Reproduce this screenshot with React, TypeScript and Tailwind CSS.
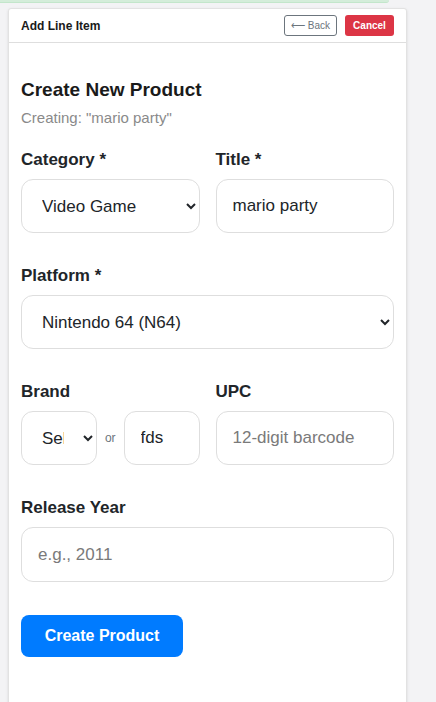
const font = { fontFamily: '"Liberation Sans", Arial, sans-serif' }

function Label({ children }: { children: React.ReactNode }) {
  return <label className="block text-[17px] leading-[19px] font-bold text-[#212529] mb-[10px]">{children}</label>
}

const field =
  'w-full h-[54px] rounded-xl border border-[#dedede] bg-white px-4 text-[17px] text-[#212529] placeholder:text-[#7a7a7a] outline-none'

export default function App() {
  return (
    <div className="min-h-[702px] bg-[#f3f3f5] overflow-hidden" style={font}>
      <div className="h-[3px] w-[389px] bg-[#d4edda] border-b border-[#c3e6cb] rounded-br-md" />
      <div className="ml-[8px] mt-[5px] w-[399px] min-h-[720px] bg-white border border-[#e2e2e2] rounded-t-[3px] shadow-sm">
        <div className="flex items-center justify-between px-3 py-[6px] border-b border-[#dedede]">
          <span className="text-[12px] font-bold text-[#1a1a1a]">Add Line Item</span>
          <div className="flex gap-2">
            <button className="h-[21px] w-[53px] rounded-[3px] border border-[#6c757d] text-[10px] text-[#6c757d]">
              ⟵ Back
            </button>
            <button className="h-[21px] w-[49px] rounded-[3px] bg-[#dc3545] text-[10px] font-bold text-white">
              Cancel
            </button>
          </div>
        </div>

        <div className="px-3 pt-[35px] pb-12">
          <h2 className="text-[19px] leading-[24px] font-bold text-[#1a1a1a]">Create New Product</h2>
          <p className="mt-[7px] text-[15px] leading-[18px] text-[#8a8a8a]">Creating: "mario party"</p>

          <div className="mt-[23px] grid grid-cols-2 gap-4">
            <div>
              <Label>Category *</Label>
              <select className={field} defaultValue="vg">
                <option value="vg">Video Game</option>
              </select>
            </div>
            <div>
              <Label>Title *</Label>
              <input className={field} defaultValue="mario party" />
            </div>
          </div>

          <div className="mt-[33px]">
            <Label>Platform *</Label>
            <select className={field} defaultValue="n64">
              <option value="n64">Nintendo 64 (N64)</option>
            </select>
          </div>

          <div className="mt-[33px] grid grid-cols-2 gap-4">
            <div>
              <Label>Brand</Label>
              <div className="flex items-center gap-2">
                <select className={field + ' min-w-0 flex-1'} defaultValue="">
                  <option value="">Select...</option>
                </select>
                <span className="text-[12px] text-[#6c757d]">or</span>
                <input className={field + ' min-w-0 flex-1'} defaultValue="fds" />
              </div>
            </div>
            <div>
              <Label>UPC</Label>
              <input className={field} placeholder="12-digit barcode" />
            </div>
          </div>

          <div className="mt-[33px]">
            <Label>Release Year</Label>
            <input className={field + ' h-[55px]'} placeholder="e.g., 2011" />
          </div>

          <button className="mt-[33px] h-[42px] w-[162px] rounded-lg bg-[#007bff] text-[16px] font-bold text-white">
            Create Product
          </button>
        </div>
      </div>
    </div>
  )
}
